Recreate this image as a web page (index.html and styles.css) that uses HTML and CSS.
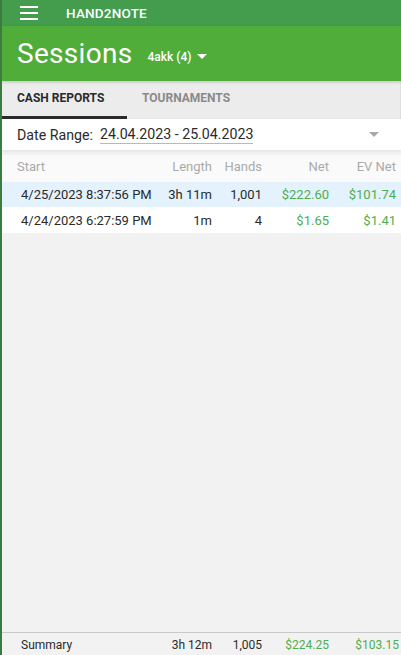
FILE: index.html
```html
<!DOCTYPE html>
<html lang="en">
<head>
  <meta charset="UTF-8">
  <meta name="viewport" content="width=device-width, initial-scale=1.0">
  <title>Hand2Note - Sessions</title>
  <link rel="stylesheet" href="styles.css">
</head>
<body>
  <div class="app">
    <div class="topbar">
      <svg class="menu-icon" width="18" height="14" viewBox="0 0 18 14">
        <rect x="0" y="0" width="18" height="2" fill="#fff"/>
        <rect x="0" y="6" width="18" height="2" fill="#fff"/>
        <rect x="0" y="12" width="18" height="2" fill="#fff"/>
      </svg>
      <span class="brand">HAND2NOTE</span>
    </div>

    <div class="header">
      <h1>Sessions</h1>
      <span class="player">4akk (4)</span>
      <svg class="caret" width="10" height="5" viewBox="0 0 10 5"><path d="M0 0 L10 0 L5 5 Z" fill="#fff"/></svg>
    </div>

    <div class="tabs">
      <div class="tab active">CASH REPORTS</div>
      <div class="tab">TOURNAMENTS</div>
    </div>

    <div class="range">
      <span class="range-label">Date Range:</span>
      <span class="range-value">24.04.2023 - 25.04.2023</span>
      <svg class="range-caret" width="10" height="5" viewBox="0 0 10 5"><path d="M0 0 L10 0 L5 5 Z" fill="#a8a8a8"/></svg>
    </div>

    <div class="table">
      <div class="row head">
        <span class="c-start">Start</span>
        <span class="c-len">Length</span>
        <span class="c-hands">Hands</span>
        <span class="c-net">Net</span>
        <span class="c-ev">EV Net</span>
      </div>
      <div class="row data selected">
        <span class="c-start">4/25/2023 8:37:56 PM</span>
        <span class="c-len">3h 11m</span>
        <span class="c-hands">1,001</span>
        <span class="c-net money">$222.60</span>
        <span class="c-ev money">$101.74</span>
      </div>
      <div class="row data">
        <span class="c-start">4/24/2023 6:27:59 PM</span>
        <span class="c-len">1m</span>
        <span class="c-hands">4</span>
        <span class="c-net money">$1.65</span>
        <span class="c-ev money">$1.41</span>
      </div>
    </div>

    <div class="spacer"></div>

    <div class="summary">
      <span class="c-start">Summary</span>
      <span class="c-len">3h 12m</span>
      <span class="c-hands">1,005</span>
      <span class="c-net money">$224.25</span>
      <span class="c-ev money">$103.15</span>
    </div>
  </div>
</body>
</html>
```

FILE: styles.css
```css
body {
  margin: 0;
  font-family: Roboto, "Liberation Sans", Arial, sans-serif;
  background: #f2f2f2;
}

.app {
  height: 655px;
  display: flex;
  flex-direction: column;
  border-left: 2px solid #3a7d3e;
  box-sizing: border-box;
  overflow: hidden;
}

.topbar {
  height: 26px;
  background: #449d4d;
  display: flex;
  align-items: center;
  color: #fff;
}

.menu-icon {
  margin-left: 18px;
}

.brand {
  margin-left: 28px;
  font-size: 13.5px;
  font-weight: 500;
  letter-spacing: 0.2px;
}

.header {
  height: 55px;
  background: #50ad3a;
  display: flex;
  align-items: center;
  color: #fff;
  box-shadow: 0 1px 3px rgba(0, 0, 0, 0.2);
  position: relative;
  z-index: 1;
}

.header h1 {
  margin: 0 0 0 15px;
  font-size: 28px;
  font-weight: 400;
  letter-spacing: 0.3px;
}

.player {
  margin-left: 15px;
  margin-top: 6px;
  font-size: 12px;
  font-weight: 500;
}

.caret {
  margin-left: 6px;
  margin-top: 5px;
}

.tabs {
  height: 38px;
  background: #ececec;
  display: flex;
  border-right: 1px solid #dedede;
}

.tab {
  width: 125px;
  box-sizing: border-box;
  padding: 10px 0 0 15px;
  font-size: 12px;
  font-weight: 700;
  color: #8a8a8a;
}

.tab.active {
  color: #2a2a2a;
  border-bottom: 3px solid #2b2b2b;
}

.range {
  height: 31px;
  background: #fff;
  display: flex;
  align-items: center;
  padding-left: 15px;
  font-size: 14.2px;
  color: #2a2a2a;
  box-shadow: 0 1px 3px rgba(0, 0, 0, 0.08);
}

.range-value {
  margin-left: 7px;
  border-bottom: 1px solid #b9b9b9;
  line-height: 17px;
}

.range-caret {
  margin-left: auto;
  margin-right: 22px;
}

.table {
  margin-top: 5px;
}

.row, .summary {
  display: flex;
  align-items: center;
  font-size: 13px;
}

.row.head {
  height: 23px;
  color: #aaa;
  background: #fafafa;
  padding-bottom: 4px;
}

.row.data {
  height: 25px;
  background: #fff;
  color: #2a2a2a;
  padding-left: 4px;
}

.row.data + .row.data {
  height: 26px;
}

.row.selected {
  background: #e3f2fd;
}

.c-start {
  width: 145px;
  padding-left: 15px;
}

.c-len {
  width: 50px;
  text-align: right;
}

.c-hands {
  width: 50px;
  text-align: right;
}

.c-net {
  width: 67px;
  text-align: right;
}

.c-ev {
  width: 67px;
  text-align: right;
}

.row.data .c-start {
  width: 141px;
}

.money {
  color: #4fae4f;
}

.spacer {
  flex: 1;
}

.summary {
  height: 20px;
  padding-top: 2px;
  border-top: 1px solid #c9c9c9;
  color: #2a2a2a;
  padding-left: 4px;
  font-size: 12px;
}

.summary .c-start {
  width: 141px;
}

.summary .c-ev {
  width: 70px;
}
```
